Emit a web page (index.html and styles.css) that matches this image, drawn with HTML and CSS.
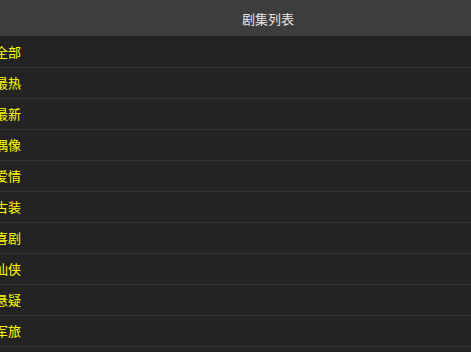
FILE: index.html
```html
<!DOCTYPE html>
<html lang="zh">
<head>
<meta charset="utf-8">
<title>剧集列表</title>
<link rel="stylesheet" href="styles.css">
</head>
<body>
<header class="bar"><h1 class="title">剧集列表</h1></header>
<ul class="list">
<li class="item">全部</li>
<li class="item">最热</li>
<li class="item">最新</li>
<li class="item">偶像</li>
<li class="item">爱情</li>
<li class="item">古装</li>
<li class="item">喜剧</li>
<li class="item">仙侠</li>
<li class="item">悬疑</li>
<li class="item">军旅</li>
<li class="item">家庭</li>
</ul>
</body>
</html>
```
FILE: styles.css
```css
html, body {
  margin: 0;
  padding: 0;
  background: #232323;
  overflow: hidden;
  font-family: "Noto Sans CJK SC", "Noto Sans", sans-serif;
}
.bar {
  height: 36px;
  background: #3d3d3d;
  display: flex;
  align-items: center;
  padding-left: 242px;
}
.title {
  margin: 0;
  font-size: 13px;
  font-weight: normal;
  color: #e6e6e6;
  line-height: 36px;
  padding-top: 2px;
}
.list {
  list-style: none;
  margin: 1px 0 0;
  padding: 0;
}
.item {
  height: 30px;
  line-height: 30px;
  border-bottom: 1px solid #333333;
  color: #ffff00;
  font-size: 13px;
  margin-left: -5px;
}
```
